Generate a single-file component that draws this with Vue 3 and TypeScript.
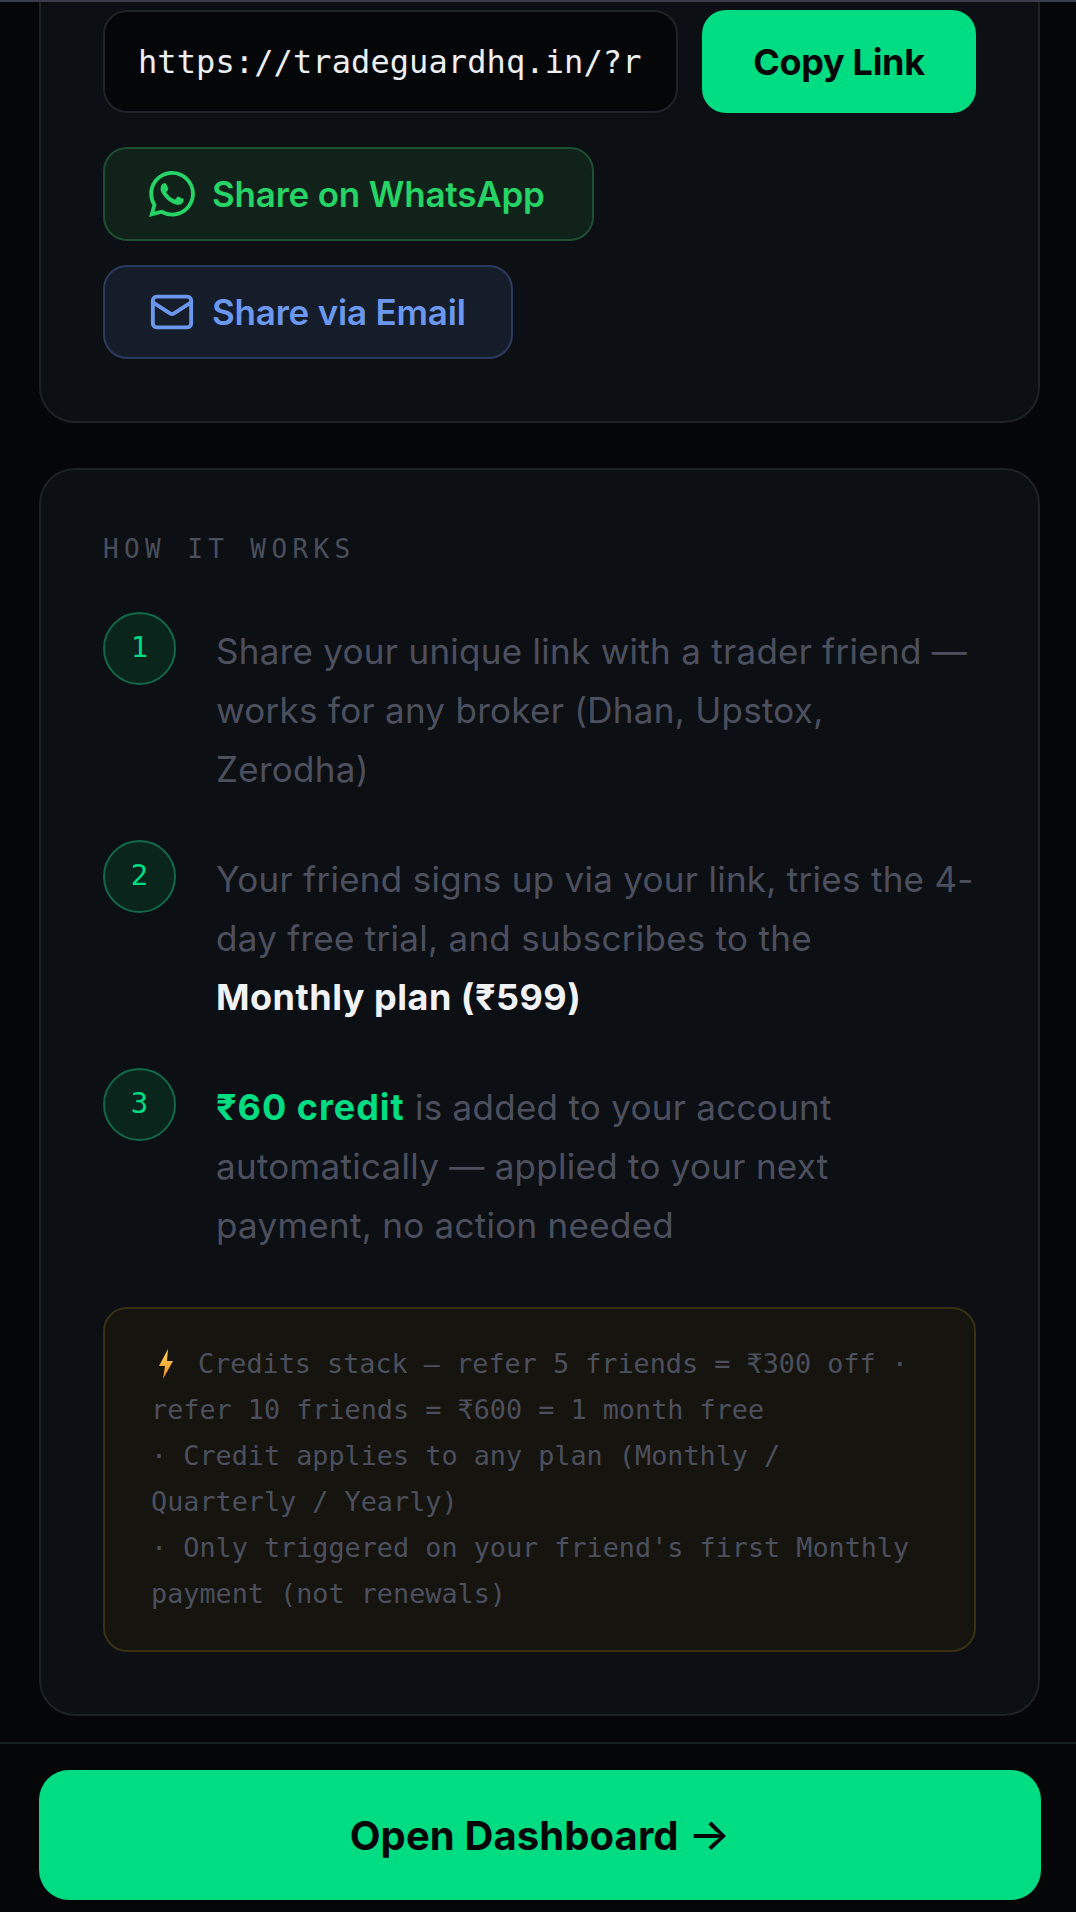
<script setup lang="ts">
const shareLink = 'https://tradeguardhq.in/?ref=TG4821'

const notes = [
  'Credit applies to any plan (Monthly / Quarterly / Yearly)',
  "Only triggered on your friend's first Monthly payment (not renewals)",
]
</script>

<template>
  <div class="page">
    <div class="top-line"></div>
    <main class="content">
      <section class="card share-card">
        <div class="link-row">
          <div class="link-input"><span class="link-text">{{ shareLink }}</span></div>
          <button class="copy-btn">Copy Link</button>
        </div>
        <a class="share-btn whatsapp">
          <svg class="icon" viewBox="0 0 24 24" fill="currentColor">
            <path d="M17.472 14.382c-.297-.149-1.758-.867-2.03-.967-.273-.099-.471-.148-.67.15-.197.297-.767.966-.94 1.164-.173.199-.347.223-.644.075-.297-.15-1.255-.463-2.39-1.475-.883-.788-1.48-1.761-1.653-2.059-.173-.297-.018-.458.13-.606.134-.133.298-.347.446-.52.149-.174.198-.298.298-.497.099-.198.05-.371-.025-.52-.075-.149-.669-1.612-.916-2.207-.242-.579-.487-.5-.669-.51-.173-.008-.371-.01-.57-.01-.198 0-.52.074-.792.372-.272.297-1.04 1.016-1.04 2.479 0 1.462 1.065 2.875 1.213 3.074.149.198 2.096 3.2 5.077 4.487.709.306 1.262.489 1.694.625.712.227 1.36.195 1.871.118.571-.085 1.758-.719 2.006-1.413.248-.694.248-1.289.173-1.413-.074-.124-.272-.198-.57-.347m-5.421 7.403h-.004a9.87 9.87 0 01-5.031-1.378l-.361-.214-3.741.982.998-3.648-.235-.374a9.86 9.86 0 01-1.51-5.26c.001-5.45 4.436-9.884 9.888-9.884 2.64 0 5.122 1.03 6.988 2.898a9.825 9.825 0 012.893 6.994c-.003 5.45-4.437 9.884-9.885 9.884m8.413-18.297A11.815 11.815 0 0012.05 0C5.495 0 .16 5.335.157 11.892c0 2.096.547 4.142 1.588 5.945L.057 24l6.305-1.654a11.882 11.882 0 005.683 1.448h.005c6.554 0 11.89-5.335 11.893-11.893a11.821 11.821 0 00-3.48-8.413Z" />
          </svg>
          Share on WhatsApp
        </a>
        <a class="share-btn email">
          <svg class="icon" viewBox="0 0 24 24" fill="none" stroke="currentColor" stroke-width="2" stroke-linecap="round" stroke-linejoin="round">
            <rect x="2" y="4" width="20" height="16" rx="2" />
            <path d="m22 7-8.97 5.7a1.94 1.94 0 0 1-2.06 0L2 7" />
          </svg>
          Share via Email
        </a>
      </section>

      <section class="card how-card">
        <h2 class="section-label">HOW IT WORKS</h2>
        <ol class="steps">
          <li class="step">
            <span class="step-num">1</span>
            <p class="step-text">Share your unique link with a trader friend — works for any broker (Dhan, Upstox, Zerodha)</p>
          </li>
          <li class="step">
            <span class="step-num">2</span>
            <p class="step-text">Your friend signs up via your link, tries the 4-day free trial, and subscribes to the<br /><strong>Monthly plan (₹599)</strong></p>
          </li>
          <li class="step">
            <span class="step-num">3</span>
            <p class="step-text"><strong class="green">₹60 credit</strong> is added to your account automatically — applied to your next payment, no action needed</p>
          </li>
        </ol>
        <div class="notice">
          <svg class="bolt" viewBox="0 0 16 30">
            <defs>
              <linearGradient id="bolt-fill" x1="0" y1="0" x2="0" y2="1">
                <stop offset="0" stop-color="#ffd35c" />
                <stop offset="1" stop-color="#f08c1e" />
              </linearGradient>
            </defs>
            <path d="M10 0 1 17h6L5 30l10-18H9Z" fill="url(#bolt-fill)" />
          </svg>
          <span>Credits stack — refer 5 friends = ₹300 off · refer 10 friends = ₹600 = 1 month free</span>
          <br />
          <template v-for="(note, i) in notes" :key="i">· {{ note }}<br /></template>
        </div>
      </section>
    </main>

    <footer class="footer">
      <button class="open-btn">Open Dashboard <span class="arrow">→</span></button>
    </footer>
  </div>
</template>

<style>
html, body {
  margin: 0;
  background: #050608;
}
</style>

<style scoped>
* {
  box-sizing: border-box;
}
.page {
  position: relative;
  height: 1912px;
  overflow: hidden;
  display: flex;
  flex-direction: column;
  background: #050608;
  font-family: "Inter", "Noto Sans", sans-serif;
}
.top-line {
  position: absolute;
  top: 0;
  left: 0;
  right: 0;
  height: 2px;
  background: #3a3d4a;
  z-index: 2;
}
.content {
  flex: 1;
  display: flex;
  flex-direction: column;
  gap: 45px;
  padding: 0 36px 0 39px;
}
.card {
  background: #0c0f13;
  border: 2px solid #1e2127;
  border-radius: 36px;
  padding: 0 62px;
}
.share-card {
  margin-top: -42px;
  padding-top: 50px;
  padding-bottom: 62px;
  display: flex;
  flex-direction: column;
  align-items: flex-start;
}
.link-row {
  display: flex;
  gap: 24px;
  width: 100%;
  margin-bottom: 34px;
}
.link-input {
  width: 575px;
  height: 103px;
  padding: 0 33px;
  display: flex;
  align-items: center;
  background: #050608;
  border: 2px solid #20232a;
  border-radius: 24px;
}
.link-text {
  display: block;
  width: 100%;
  overflow: hidden;
  white-space: nowrap;
  font-family: "DejaVu Sans Mono", "Liberation Mono", monospace;
  font-size: 32px;
  letter-spacing: 0.1px;
  color: #eceef2;
}
.copy-btn {
  width: 275px;
  height: 103px;
  border: 0;
  border-radius: 24px;
  background: #00dc82;
  color: #050608;
  font: 700 36px "Inter", sans-serif;
  letter-spacing: -0.3px;
}
.share-btn {
  display: inline-flex;
  align-items: center;
  gap: 17px;
  height: 94px;
  padding: 0 44px;
  border-radius: 24px;
  font-size: 35px;
  font-weight: 600;
  letter-spacing: -0.2px;
}
.icon {
  width: 46px;
  height: 46px;
  flex: none;
}
.whatsapp {
  width: 491px;
  margin-bottom: 24px;
  background: #10221a;
  border: 2px solid #1d5032;
  color: #25d366;
}
.email {
  width: 410px;
  background: #161d2a;
  border: 2px solid #2c3a5c;
  color: #6b98ee;
}
.how-card {
  padding-top: 64px;
  padding-bottom: 62px;
}
.section-label {
  margin: 0 0 48px;
  font: 400 26px "DejaVu Sans Mono", "Liberation Mono", monospace;
  letter-spacing: 5.4px;
  color: #4a4f5c;
}
.steps {
  list-style: none;
  margin: 0;
  padding: 0;
  display: flex;
  flex-direction: column;
  gap: 41px;
}
.step {
  display: flex;
  gap: 40px;
}
.step-num {
  flex: none;
  width: 73px;
  height: 73px;
  padding-bottom: 3px;
  display: flex;
  align-items: center;
  justify-content: center;
  border-radius: 50%;
  background: #0a261c;
  border: 2px solid #11694a;
  font: 400 29px "DejaVu Sans Mono", monospace;
  color: #00dc82;
}
.step-text {
  margin: 0;
  padding-top: 10px;
  font-size: 35px;
  line-height: 59px;
  letter-spacing: 0.28px;
  color: #4c505e;
}
.step-text strong {
  font-size: 36px;
  font-weight: 700;
  letter-spacing: 0.5px;
  color: #f1f2f5;
}
.step-text strong.green {
  letter-spacing: 1px;
  color: #00dc82;
}
.notice {
  margin-top: 52px;
  padding: 32px 46px 33px;
  background: #15140f;
  border: 2px solid #3a3113;
  border-radius: 24px;
  font-family: "DejaVu Sans Mono", "Liberation Mono", monospace;
  font-size: 26.8px;
  line-height: 46px;
  color: #4c505e;
}
.bolt {
  width: 16px;
  height: 30px;
  margin: 0 24px 0 7px;
  vertical-align: -6px;
}
.footer {
  padding: 26px 36px 12px 39px;
  border-top: 2px solid #11201c;
  background: #050608;
}
.open-btn {
  display: block;
  width: 1002px;
  height: 130px;
  border: 0;
  border-radius: 30px;
  background: #00dc82;
  color: #050608;
  font: 700 40px "Inter", sans-serif;
  letter-spacing: 0.1px;
}
.arrow {
  font-size: 44px;
  font-weight: 500;
  line-height: 1;
}
</style>
